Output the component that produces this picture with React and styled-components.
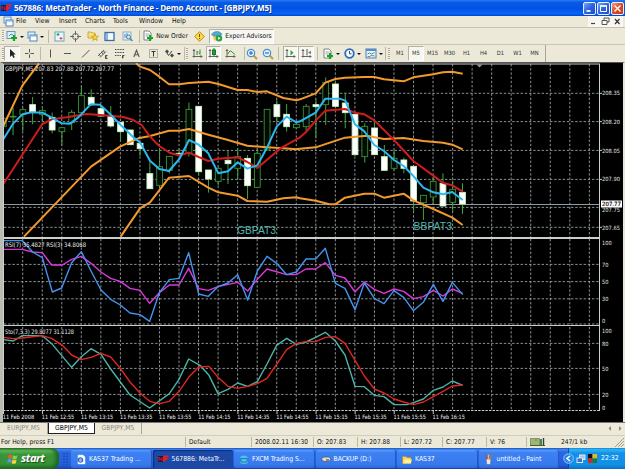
import styled, { createGlobalStyle, css } from "styled-components";

/* ===== GLOBAL ===== */

const GlobalStyle = createGlobalStyle`
*{ box-sizing:border-box; }
body{
margin:0;
overflow:hidden;
background:#ece9d8;
font-family:"DejaVu Sans Condensed","DejaVu Sans",sans-serif;
font-size:6.6px;
line-height:1;
color:#111;
}
svg{ display:block; flex:none; }
`;

const Window = styled.div`
display:flex;
flex-direction:column;
width:625px;
height:469px;
overflow:hidden;
white-space:nowrap;
`;

/* ===== TITLE + MENU ===== */

const TitleBar = styled.header`
height:16px;
flex:none;
display:flex;
align-items:center;
padding:0 1px;
background:linear-gradient(#2a7cf0 0,#0a5be8 15%,#0052e0 50%,#0763fa 85%,#0146c8 100%);
`;

const Title = styled.h1`
margin:0 auto 0 2px;
font-family:"Open Sans","Noto Sans",sans-serif;
font-size:8.1px;
font-weight:700;
letter-spacing:-0.13px;
color:#fff;
text-shadow:1px 1px 0 #0a2f8c;
`;

const WinButton = styled.span`
width:13px;
height:13px;
margin-left:1px;
border:1px solid #e8eefc;
border-radius:2px;
display:flex;
align-items:center;
justify-content:center;
background:${p => p.$close ? "linear-gradient(135deg,#f0a080,#dd4a22 50%,#c03a18)" : "linear-gradient(135deg,#7ba4f4,#2d63e0 50%,#1c4fd0)"};
`;

const MenuBar = styled.nav`
height:12px;
flex:none;
display:flex;
align-items:center;
padding:0 2px 0 3px;
border-bottom:1px solid #c5c2b4;
font-size:6.8px;
`;

const MenuItem = styled.span`
width:${p => p.$w}px;
`;

const MdiButtons = styled.span`
margin-left:auto;
display:flex;
gap:1px;
background:#f8f7f2;
`;

/* ===== TOOLBARS ===== */

const Toolbar = styled.div`
height:17px;
flex:none;
display:flex;
align-items:center;
padding-left:2px;
width:${p => p.$w || 625}px;
border-bottom:${p => p.$line ? "1px solid #c9c6b8" : "0"};
border-right:${p => p.$w ? "1px solid #aaa798" : "0"};
`;

const Grip = styled.span`
width:2px;
height:12px;
flex:none;
margin-right:${p => p.$r || 0}px;
background:repeating-linear-gradient(#aaa799 0 1px,#f6f4ea 1px 2px);
`;

const Divider = styled.span`
width:1px;
height:13px;
flex:none;
background:#bdbaaa;
margin:0 ${p => p.$r || 0}px 0 ${p => p.$l || 0}px;
`;

const Slot = styled.span`
width:${p => p.$w}px;
height:15px;
flex:none;
display:flex;
align-items:center;
justify-content:center;
gap:2px;
${p => p.$on && css`
background:#f7f6f0;
border:1px solid #b4b1a3;
border-right-color:#fff;
border-bottom-color:#fff;
`}
`;

const Caret = styled.i`
border:2px solid transparent;
border-top:2.5px solid #111;
border-bottom:0;
margin-top:1px;
`;

const Period = styled(Slot)`
font-size:5.8px;
color:#333;
`;

/* ===== CHART ===== */

const ChartFrame = styled.main`
height:360px;
flex:none;
background:#000;
border-left:2px solid #b9bdb0;
border-right:2px solid #e8e6d8;
border-top:1px solid #555;

svg{ margin-left:-2px; }
`;

const Note = styled.text`
font-family:"Liberation Sans",Arial,sans-serif;
font-size:10.5px;
fill:#4fb8b0;
`;

/* ===== BOTTOM ===== */

const Tabs = styled.div`
height:13px;
flex:none;
display:flex;
align-items:flex-start;
border-top:1px solid #777;
`;

const Tab = styled.span`
width:${p => p.$w}px;
height:11px;
display:flex;
align-items:center;
justify-content:center;
font-size:6.8px;
color:${p => p.$on ? "#000" : "#8e8b7e"};
background:${p => p.$on ? "#fff" : "transparent"};
border-right:1px solid ${p => p.$on ? "#222" : "#aaa798"};
${p => p.$on && "border-bottom:1px solid #222;border-left:1px solid #222;"}
`;

const TabArrows = styled.span`
margin:2px 3px 0 auto;
display:flex;
gap:6px;
`;

const StatusBar = styled.footer`
height:13px;
flex:none;
display:flex;
align-items:center;
border-top:1px solid #d0cdbd;
background:#ece9d8;
`;

const Cell = styled.span`
width:${p => p.$w}px;
height:10px;
flex:none;
display:flex;
align-items:center;
padding-left:${p => p.$first ? 1 : 3}px;
border-left:${p => p.$first ? "0" : "1px solid #bbb8a8"};
`;

const TaskBar = styled.div`
height:21px;
flex:none;
display:flex;
align-items:stretch;
background:linear-gradient(#1f50b8 0,#3f86f2 8%,#2a66dd 20%,#245edb 80%,#1941a5 100%);
color:#fff;
`;

const Start = styled.div`
width:59px;
display:flex;
align-items:center;
gap:3px;
padding-left:7px;
border-radius:0 8px 8px 0;
background:linear-gradient(#2f7a2f 0,#5fb85c 12%,#3a963a 30%,#379137 75%,#256f25 100%);
box-shadow:inset -3px 0 4px #1d5f1d;
font-family:"Open Sans",sans-serif;
font-size:11.2px;
font-style:italic;
font-weight:700;
text-shadow:1px 1px 1px #1a4a1a;

span{ margin-top:-2px; letter-spacing:-0.5px; }
`;

const Quick = styled.span`
width:12px;
display:flex;
align-items:center;
justify-content:center;
`;

const Task = styled.div`
width:80.5px;
margin:2px 1px 1px 0;
flex:none;
display:flex;
align-items:center;
gap:3px;
padding-left:5px;
border-radius:2px;
font-size:6.8px;
background:${p => p.$on ? "#1c48a6" : "linear-gradient(#5c9bfa 0,#3c81f3 15%,#3879ec 80%,#2e69d8 100%)"};
box-shadow:${p => p.$on ? "inset 1px 1px 1px #0d2d78" : "inset -1px 0 0 #2558bf"};
`;

const Tray = styled.div`
flex:1;
margin-left:8px;
display:flex;
align-items:center;
gap:2px;
font-size:6.8px;
background:linear-gradient(#1a7fd8 0,#2eb4f2 8%,#1290e8 25%,#1190e8 80%,#0d6fc0 100%);
border-left:1px solid #0b4c9c;

svg:first-child{ margin-left:-6px; }
span{ margin-left:2px; }
`;

/* ===== ICONS ===== */

const Svg = ({ w = 11, h = 11, children }) => (
  <svg width={w} height={h} viewBox={`0 0 ${w} ${h}`} fill="none">{children}</svg>
);

const Plus = ({ x, y }) => (
  <path d={`M${x} ${y - 3}v6M${x - 3} ${y}h6`} stroke="#12a52a" strokeWidth="2.2" />
);

const Logo = () => (
  <Svg w={11} h={8}>
    <rect y="1" width="6" height="6" fill="#151a3c" />
    <path d="M1 6V2l3 4V2" stroke="#c22" strokeWidth="1" />
    <path d="M6 7V1.5h4.500M6 4h3.500" stroke="#ef1c2c" strokeWidth="1.800" />
  </Svg>
);

const Windows = () => (
  <Svg>
    <rect x="1" y="1" width="7" height="6" fill="#e8f3fc" stroke="#5b8fc4" />
    <rect x="3" y="4" width="7" height="6" fill="#fff" stroke="#4a82be" />
    <path d="M3 5h7" stroke="#69a7e0" />
  </Svg>
);

const NewChart = () => (
  <Svg w={12} h={12}>
    <rect x="1" y="1.500" width="8" height="7" fill="#dceefa" stroke="#6898bd" />
    <path d="M3 6l2-2 2 1" stroke="#4b90c8" />
    <Plus x={8} y={8} />
  </Svg>
);

const Market = () => (
  <Svg>
    <rect x="1" y="1" width="9" height="9" fill="#eaf7ff" stroke="#6aa0c8" />
    <path d="M2.800 4l1.200-1.500L5.200 4z" fill="#189f36" stroke="#189f36" />
    <path d="M5.800 7L7 8.300 8.200 7z" fill="#de3b24" stroke="#de3b24" />
  </Svg>
);

const Compass = () => (
  <Svg>
    <circle cx="5.500" cy="5.500" r="3" stroke="#666" />
    <path d="M5.500 0v4M5.500 7v4M0 5.500h4M7 5.500h4" stroke="#666" />
  </Svg>
);

const StarFolder = () => (
  <Svg w={12} h={12}>
    <path d="M1 2h3l1 1h3v5H1z" fill="#f8df7c" stroke="#c39a2a" strokeWidth=".8" />
    <path d="M8 4l1 2.200 2.500.200-1.900 1.600.600 2.500L8 9.200 5.800 10.500l.600-2.500-1.900-1.600L7 6.200z" fill="#fbd52c" stroke="#b8860b" strokeWidth=".6" />
  </Svg>
);

const Terminal = () => (
  <Svg>
    <rect x="1" y="1.500" width="9" height="8" fill="#f4faff" stroke="#3570aa" strokeWidth="1.300" />
    <path d="M3 2v7" stroke="#3570aa" />
  </Svg>
);

const Tester = () => (
  <Svg>
    <rect x="1" y="1" width="8" height="8" fill="#e7f1f8" stroke="#7f9db4" strokeWidth=".8" />
    <path d="M3 3v4M5 2v4" stroke="#3f8ac4" />
    <circle cx="6.500" cy="6" r="2" fill="#cde9fc" stroke="#4f80a8" />
    <path d="M8 7.500l2.500 2.500" stroke="#4f80a8" strokeWidth="1.300" />
  </Svg>
);

const Order = () => (
  <Svg w={11} h={12}>
    <path d="M1 1h5l2 2v7H1z" fill="#fff" stroke="#667" strokeWidth=".8" />
    <path d="M2.500 4h4M2.500 6h3" stroke="#777" strokeWidth=".7" />
    <Plus x={7} y={8} />
  </Svg>
);

const Warning = () => (
  <Svg>
    <path d="M5.500.700l4.800 4.800-4.800 4.800L.700 5.500z" fill="#fbd94a" stroke="#b98b12" />
    <path d="M5.500 3v3M5.500 7v1" stroke="#705000" />
  </Svg>
);

const Expert = () => (
  <Svg w={12} h={12}>
    <path d="M2 6h8l-1 4.500H3z" fill="#f2c84b" />
    <path d="M.500 4.800C2 1 9 0 11 4.500L8 6H3z" fill="#53a8d6" stroke="#3484ae" strokeWidth=".6" />
    <circle cx="8" cy="8.300" r="3.200" fill="#27a43b" />
    <path d="M7.200 6.800v3l2.300-1.500z" fill="#fff" />
  </Svg>
);

const Cursor = () => (
  <Svg><path d="M3 1v8l2-1.800L6.400 10l1.300-.700L6.500 6.500h2.300z" fill="#222" /></Svg>
);

const Line = ({ d, c = "#555", sw = 1 }) => (
  <Svg><path d={d} stroke={c} strokeWidth={sw} /></Svg>
);

const Channel = () => (
  <Svg>
    <path d="M1 8l6-6M3 9.500l6-6M2 5.500l1.500 3M4.500 3.500l1.500 3M6.500 2l1 3" stroke="#444" strokeWidth=".8" />
    <path d="M10.500 7.500H8.500v3h2M8.500 9h1.500" stroke="#111" strokeWidth=".7" />
  </Svg>
);

const Fibo = () => (
  <Svg>
    <path d="M1 1.500h9M1 4.500h9M1 7.500h6" stroke="#444" strokeDasharray="1 .6" />
    <path d="M10.500 7.500h-2v3M8.500 9h1.500" stroke="#111" strokeWidth=".7" />
  </Svg>
);

const TextLabel = () => (
  <Svg>
    <rect x="1.500" y="1.500" width="8" height="8" stroke="#777" strokeDasharray="1 1" />
    <path d="M3.500 3.500h4M5.500 3.500v5" stroke="#333" />
  </Svg>
);

const Arrows = () => (
  <Svg>
    <path d="M1 3.500L3 1.500l2 2-2 2z" fill="#444" />
    <path d="M6 7.500l2-2 2 2-2 2z" fill="#444" />
    <path d="M3 5l1.500 2.500L8 3" stroke="#444" />
  </Svg>
);

/* small axis with something plotted on it */
const Axis = ({ children }) => (
  <Svg>
    <path d="M2 1v8.500M.500 8.500H10.500M.800 2.500h2.400M9 7.200v2.600" stroke="#555" strokeWidth=".9" />
    {children}
  </Svg>
);

const Zoom = ({ plus }) => (
  <Svg w={12} h={12}>
    <path d="M7.500 7.500L11 11" stroke="#c79b2b" strokeWidth="2" />
    <circle cx="5" cy="5" r="3.700" fill="#dff1ff" stroke="#4a90cf" strokeWidth="1.200" />
    <path d={plus ? "M3 5h4M5 3v4" : "M3 5h4"} stroke="#1d64b4" strokeWidth="1.100" />
  </Svg>
);

const Clock = () => (
  <Svg>
    <circle cx="5.500" cy="5.500" r="4.300" fill="#f3faff" stroke="#2a6dbb" strokeWidth="1.800" />
    <path d="M5.500 3v2.800h2" stroke="#335" strokeWidth=".9" />
  </Svg>
);

const Template = () => (
  <Svg w={12} h={11}>
    <rect x="1" y="1" width="10" height="9" fill="#e8f4fc" stroke="#4a7fae" />
    <path d="M1 2h10" stroke="#4a8fd0" strokeWidth="2" />
    <path d="M2.500 6l2-1 2 1 3-1.500M2.500 8.500h2l2-1 3 .500" stroke="#466" strokeWidth=".8" />
  </Svg>
);

const Flag = () => (
  <Svg w={11} h={12}>
    <path d="M1.500 2.200Q3.500.800 5.300 2L4.700 5.500Q3 4.500 1 5.800z" fill="#ee5a2a" />
    <path d="M6 2.300q2 1.200 4.300 0l-.700 3.600q-2 1.100-4.200 0z" fill="#8cd04a" />
    <path d="M.900 6.500q1.900-1.400 3.700-.200L4 9.900Q2.200 8.700.200 10z" fill="#5a94f0" />
    <path d="M5.300 6.700q2 1.200 4.200 0l-.700 3.500q-2 1.200-4.100 0z" fill="#fbd33c" />
  </Svg>
);

const Page = () => (
  <Svg w={10} h={11}>
    <path d="M2 1h5l2 2v7H2z" fill="#fff" stroke="#d7e3ff" strokeWidth=".5" />
    <circle cx="4.500" cy="6" r="2.200" stroke="#2765c8" strokeWidth="1.200" />
    <path d="M2.500 6h4" stroke="#2765c8" />
  </Svg>
);

const Globe = () => (
  <Svg w={10} h={11}>
    <path d="M1 3q3-3 8 0L7 5.500 9 9q-4 2-8 0l2-3z" fill="#4ec4e8" />
    <path d="M2 4.500h6M2 8h6" stroke="#1d7fae" />
  </Svg>
);

const Drive = () => (
  <Svg w={10} h={8}>
    <path d="M0 4l3-2h5l2 2-2 2.500H3z" fill="#d8d8d8" stroke="#555" strokeWidth=".7" />
    <path d="M5 5h3" stroke="#333" />
  </Svg>
);

const Folder = () => (
  <Svg w={10} h={9}>
    <path d="M.500 1.500h3.500l1 1h4v6h-8.500z" fill="#f5d560" stroke="#b58e22" strokeWidth=".7" />
    <path d="M1 8.500L2.500 4.500H10L8.700 8.500z" fill="#fff0a0" />
  </Svg>
);

const Paint = () => (
  <Svg w={10} h={11}>
    <path d="M2 5h5l-.700 5.500H2.700z" fill="#e2e8f0" stroke="#667" strokeWidth=".6" />
    <path d="M3 5L1.500 1" stroke="#e33" strokeWidth="1.200" />
    <path d="M4.500 5V.500" stroke="#f2c22c" strokeWidth="1.300" />
    <path d="M6 5l1.700-4" stroke="#b0763a" strokeWidth="1.300" />
  </Svg>
);

const Meter = () => (
  <Svg w={15} h={8}>
    <path d="M1 0v8M3 0v8M5 0v8M7 0v8M9 0v8" stroke="#1f5b28" strokeWidth="1.100" />
    <path d="M2 1v6M4 1v6M6 3v4M8 1v6" stroke="#dcd458" strokeWidth=".9" />
    <path d="M11 1v7M13.500 0v8" stroke="#22492a" strokeWidth="1.400" />
    <path d="M0 7.500h15" stroke="#2d6b38" />
  </Svg>
);

/* ===== CHART DATA ===== */

// values are in thirds of a pixel, each part carries its own x shift
const series = (...parts) =>
  parts.map(([dx, pts]) =>
    pts.split(" ").map(p => {
      const [x, y] = p.split(",");
      return `${(+x + dx) / 3},${+y / 3}`;
    }).join(" ")
  ).join(" ");

const upperStart = series([0, "10,198 67,77 117,10"]);
const upper = series(
  [0, "408,10 420,20 450,30"],
  [450, "28,50 57,73 88,73 117,69 175,65 205,72 263,90 292,90 322,96 351,94 400,114 439,121"],
  [900, "0,118 47,100 76,68 106,57 135,53 193,51 223,51 252,58 311,64 340,52 400,43 429,37 457,35 488,41"]
);
const middle = series(
  [0, "72,530 273,320 360,260 415,235 450,228"],
  [450, "57,212 88,212 117,207 175,224 234,240 292,257 351,262 400,265 439,268"],
  [900, "0,266 47,262 135,233 200,227 252,237 311,234 370,243 429,248 457,254 488,268"]
);
const lower = series(
  [0, "362,530 420,445 450,427"],
  [450, "57,353 117,348 175,383 205,397 263,407 292,423 351,425 400,415 439,412"],
  [900, "0,415 47,422 88,433 106,433 135,413 193,401 223,401 252,413 311,401 340,421 400,447 457,473 488,495"]
);
const bands = [upperStart, upper, middle, lower];

const slow = series(
  [0, "10,372 127,192 155,178 200,172 260,162 330,167 370,171 400,180 425,195 450,230"],
  [450, "28,258 60,279 88,286 117,278 146,291 175,303 205,296 263,292 292,306 322,324 390,266 439,238"],
  [900, "0,232 18,216 47,182 76,152 135,147 165,158 193,163 223,181 282,240 340,303 400,347 429,369 457,376 488,395"]
);
const fast = series(
  [0, "10,238 40,190 67,163 95,157 127,158 155,173 185,190 210,191 235,172 272,133 300,134 330,162 362,195 400,232 420,247 450,302"],
  [450, "28,327 57,333 88,297 117,240 146,254 175,280 205,340 234,334 263,307 292,326 322,316 351,263 380,200 410,170 439,187"],
  [900, "0,184 47,158 76,116 118,116 136,122 165,193 193,214 223,255 252,273 282,300 311,318 340,348 370,383 400,397 429,403 457,396 488,420"]
);

const rsiFast = series(
  [0, "10,14 67,14 98,48 127,65 157,168 185,156 215,80 244,47 273,105 303,162 332,190 361,207 390,231 420,236 449,256 478,170 508,131 537,127 566,50 596,174 625,181 654,152 684,141 713,116 743,192 772,105 801,61 830,82 860,116 889,108"],
  [900, "18,69 47,69 76,37 106,142 135,157 165,221 193,141 223,187 252,203 282,164 311,184 340,224 370,199 400,145 429,196 457,139 488,176"]
);
const rsiSlow = series(
  [0, "10,40 67,40 98,48 127,50 155,87 187,87 215,70 244,61 273,82 303,108 332,127 361,136 390,157 420,163 449,202 478,170 508,147 537,147 566,97 596,158 625,163 654,152 713,139 743,165 772,130 801,99 860,116 889,116"],
  [900, "18,99 47,99 76,80 106,118 135,126 165,168 193,138 223,160 252,172 282,159 311,166 340,188 370,182 400,163 429,180 457,159 488,172"]
);
const stoMain = series(
  [0, "10,311 40,315 67,299 127,299 157,325 215,394 244,362 273,338 303,355 332,399 390,477 449,516 508,473 537,430 566,369 600,388 627,418 654,473 684,460 713,441 743,451 772,437 801,384 830,328 860,307 889,325"],
  [900, "18,318 47,304 76,289 106,315 135,357 165,451 193,452 223,478 252,482 282,506 320,506 340,500 370,489 400,463 429,453 457,435 488,448"]
);
const stoSignal = series(
  [0, "10,304 40,308 67,306 127,299 155,307 187,328 215,357 244,371 273,364 303,352 332,363 361,397 390,438 420,471 449,496 478,503 508,496 537,466 566,424 596,393 627,391 654,424 684,451 713,457 743,451 772,443 801,427 860,341 889,322"],
  [900, "18,317 47,317 76,304 106,302 135,322 165,373 193,420 223,459 252,471 282,489 311,498 340,506 370,498 400,482 429,466 457,450 488,447"]
);

// high, low, body top, body bottom, falling
const candles = [
  [155, 200, 175, 200, 0], [143, 226, 169, 171, 0], [144, 213, 149, 163, 0], [111, 193, 134, 157, 1],
  [145, 185, 152, 163, 0], [158, 220, 172, 210, 1], [203, 257, 203, 215, 0], [150, 210, 157, 188, 0],
  [78, 165, 107, 158, 0], [88, 138, 112, 134, 1], [138, 170, 146, 168, 1], [138, 203, 167, 198, 1],
  [187, 245, 187, 215, 1], [210, 254, 210, 254, 1], [250, 288, 250, 266, 1], [305, 386, 341, 386, 1],
  [265, 376, 320, 376, 0], [289, 340, 289, 331, 0], [265, 285, 280, 284, 1], [128, 290, 148, 280, 0],
  [139, 347, 139, 335, 1], [330, 398, 330, 357, 1], [320, 377, 325, 364, 0], [273, 372, 301, 311, 1],
  [265, 357, 290, 325, 0], [285, 417, 295, 377, 1], [265, 382, 280, 382, 0], [148, 270, 148, 270, 0],
  [120, 190, 134, 170, 1], [132, 215, 163, 200, 1], [182, 207, 193, 203, 0], [132, 212, 139, 200, 0],
  [118, 235, 134, 140, 1], [52, 195, 67, 134, 0], [62, 139, 72, 139, 1], [98, 205, 129, 158, 1],
  [158, 288, 163, 284, 1], [190, 308, 199, 290, 0], [182, 284, 204, 284, 1], [255, 331, 290, 331, 1],
  [270, 330, 295, 325, 0], [293, 340, 300, 325, 1], [319, 455, 319, 423, 1], [406, 480, 406, 428, 0],
  [350, 432, 364, 411, 0], [340, 438, 370, 438, 1], [362, 455, 388, 427, 0], [370, 462, 397, 432, 1],
];

const times = ["2008", "12:55", "13:15", "13:35", "13:55", "14:15", "14:35", "14:55", "15:15", "15:35", "15:55", "16:15"];
const columns = Array.from({ length: 30 }, (_, i) => 22.7 + i * 19.54);

/* ===== CHART PANES ===== */

const Grid = ({ rows, top, bottom }) => (
  <g stroke="#a4aaad" strokeWidth=".85" strokeDasharray="2.400 1.800">
    {columns.map(x => <path key={x} d={`M${x} ${top}V${bottom}`} />)}
    {rows.map(y => <path key={y} d={`M4 ${y}H599`} />)}
  </g>
);

const Plot = ({ points, color, width = 1.4 }) => (
  <polyline points={points} fill="none" stroke={color} strokeWidth={width} strokeLinejoin="round" />
);

const Scale = ({ items }) => (
  <g fill="#e4e4e4" fontSize="5.700">
    {items.map(([label, y]) => (
      <text key={label} x="602" y={y} textLength={label.length > 3 ? 18 : label.length * 3.2} lengthAdjust="spacingAndGlyphs">{label}</text>
    ))}
  </g>
);

const Frame = ({ top, bottom }) => (
  <path d={`M3.500 ${top}V${bottom}M599.500 ${top}V${bottom}`} stroke="#ccd0cc" />
);

const PricePane = () => (
  <svg width="623" height="175" viewBox="0 63 623 175">
    <Grid rows={[93.3, 121.6, 150.4, 179.4, 207.4, 227.3]} top={64} bottom={237} />
    <path d="M3 204.500H599" stroke="#8f9aa3" />
    <g transform="translate(0 60)">
      {candles.map(([hi, lo, a, b, down], i) => {
        const x = 3.3 + i * 9.77;
        return (
          <g key={i} stroke="#40a43c" strokeWidth="1">
            <path d={`M${x} ${hi / 3}V${lo / 3}`} />
            <rect x={x - 2.9} y={a / 3} width="5.800" height={(b - a) / 3} fill={down ? "#fff" : "#020a02"} stroke={down ? "#c9f7c0" : "#3a923a"} strokeWidth=".9" />
          </g>
        );
      })}
      {bands.map(points => <Plot key={points} points={points} color="#f39a2e" width={2} />)}
      <Plot points={slow} color="#d01c1c" width={2} />
      <Plot points={fast} color="#2cb8f0" width={2} />
    </g>
    <rect x="0" y="63" width="3" height="175" fill="#b9bdb0" />
    <path d="M3 64H600" stroke="#c9cfca" />
    <path d="M3 237.700H600" stroke="#c9cfca" strokeWidth="1.400" />
    <Frame top={64} bottom={238} />
    <path d="M476.500 64.500h6l-3 3z" fill="#8d989c" />
    <text x="5" y="71.300" fontSize="6.200" fill="#eee" textLength="109" lengthAdjust="spacingAndGlyphs">GBPJPY,M5  207.83 207.88 207.72 207.77</text>
    <Note x="237" y="234" textLength="39" lengthAdjust="spacingAndGlyphs">GBPAT3</Note>
    <Note x="413.500" y="229.500" textLength="38.500" lengthAdjust="spacingAndGlyphs">BBPAT3</Note>
    <Scale items={[["208.35", 95], ["208.20", 123.5], ["208.05", 152.5], ["207.90", 181.3], ["207.75", 211.5], ["207.65", 229.5]]} />
    <path d="M600 93.300h2M600 121.600h2M600 150.400h2M600 179.400h2M600 227.300h2" stroke="#ccc" />
    <rect x="601" y="200.500" width="21" height="7" fill="#fff" />
    <text x="602" y="206" fontSize="5.700" fill="#000" stroke="#000" strokeWidth=".15" textLength="19" lengthAdjust="spacingAndGlyphs">207.77</text>
  </svg>
);

const RsiPane = () => (
  <svg width="623" height="87" viewBox="0 238 623 87">
    <Grid rows={[264.4, 281.6, 298.8, 324]} top={239} bottom={324} />
    <g transform="translate(0 236)">
      <Plot points={rsiSlow} color="#dc38dc" />
      <Plot points={rsiFast} color="#4494f0" />
    </g>
    <rect x="0" y="238" width="3" height="87" fill="#b9bdb0" />
    <path d="M3 238.500H600" stroke="#c9cfca" />
    <Frame top={238} bottom={325} />
    <text x="5" y="246.800" fontSize="6.200" fill="#eee" textLength="81" lengthAdjust="spacingAndGlyphs">RSI(7) 35.4827  RSI(3) 34.8068</text>
    <Scale items={[["100", 245], ["70", 266.5], ["50", 283.8], ["30", 301], ["0", 322.5]]} />
  </svg>
);

const StoPane = () => (
  <svg width="623" height="97" viewBox="0 325 623 97">
    <Grid rows={[343.4, 368.4, 394.4]} top={327} bottom={410} />
    <g transform="translate(0 236)">
      <Plot points={stoMain} color="#4cb4a6" />
      <Plot points={stoSignal} color="#e02822" />
    </g>
    <rect x="0" y="325" width="3" height="97" fill="#b9bdb0" />
    <path d="M3 325.500H600" stroke="#c9cfca" strokeWidth="1.200" />
    <path d="M3 410.500H600" stroke="#c9cfca" strokeDasharray="2.400 1.200" />
    <Frame top={325} bottom={411} />
    <text x="5" y="333.800" fontSize="6.200" fill="#eee" textLength="69" lengthAdjust="spacingAndGlyphs">Sto(7,3,3) 29.8077 31.1128</text>
    <Scale items={[["100", 332.5], ["80", 345.5], ["50", 370.5], ["20", 396.5], ["0", 409.5]]} />
    <g fill="#f2f2f2" fontSize="5.900">
      {times.map((t, i) => (
        <g key={t}>
          <path d={`M${3.5 + i * 39.07} 410v4`} stroke="#ccc" />
          <text x={2.8 + i * 39.07} y="418.800" textLength={i ? 32.3 : 31.3} lengthAdjust="spacingAndGlyphs">11 Feb {t}</text>
        </g>
      ))}
    </g>
  </svg>
);

/* ===== PARTS ===== */

const FileToolbar = () => (
  <Toolbar $line>
    <Grip $r={1} />
    <Slot $w={20}><NewChart /><Caret /></Slot>
    <Slot $w={21}><Windows /><Caret /></Slot>
    <Divider $l={2} $r={2} />
    <Slot $w={16}><Market /></Slot>
    <Slot $w={17}><Compass /></Slot>
    <Slot $w={17}><StarFolder /></Slot>
    <Slot $w={17}><Terminal /></Slot>
    <Slot $w={18}><Tester /></Slot>
    <Divider $l={3} $r={1} />
    <Slot $w={49}><Order />New Order</Slot>
    <Slot $w={19}><Warning /></Slot>
    <Slot $w={65} $on><Expert />Expert Advisors</Slot>
  </Toolbar>
);

const DrawToolbar = () => (
  <Toolbar $w={546}>
    <Grip />
    <Slot $w={16} $on><Cursor /></Slot>
    <Slot $w={18}><Line d="M5.500 1v3.500M5.500 6.500V10M1 5.500h3.500M6.500 5.500H10" /></Slot>
    <Divider $l={2} $r={1} />
    <Slot $w={16}><Line d="M5.500 1.500v8" /></Slot>
    <Slot $w={19}><Line d="M2 5.500h7" /></Slot>
    <Slot $w={16}><Line d="M2 9.500L9.500 2" /></Slot>
    <Slot $w={18}><Channel /></Slot>
    <Slot $w={16}><Fibo /></Slot>
    <Slot $w={18}><Line d="M2.800 9L5.500 2.300 8.200 9M3.800 6.800h3.400" sw={1.1} /></Slot>
    <Slot $w={16}><TextLabel /></Slot>
    <Slot $w={22}><Arrows /><Caret /></Slot>
    <Divider $l={1} $r={1} />
    <Grip $r={1} />
    <Slot $w={17}>
      <Axis><path d="M5 3v4M5 4h1.500M8 1.500v5M7 5.500h1" stroke="#2d8a3a" /></Axis>
    </Slot>
    <Slot $w={15} $on>
      <Axis><rect x="4.500" y="2" width="3" height="4.500" fill="#2bc24a" stroke="#147a2a" /><path d="M6 0v8" stroke="#147a2a" /></Axis>
    </Slot>
    <Slot $w={19}>
      <Axis><path d="M3 6q2-5 4-2l3 2.500" stroke="#2d9a40" /></Axis>
    </Slot>
    <Divider $l={4} />
    <Slot $w={13}><Zoom plus /></Slot>
    <Slot $w={20}><Zoom /></Slot>
    <Divider $r={4} />
    <Slot $w={15} $on>
      <Axis><path d="M5.500 2v5.500l3-2.700z" fill="#1fa83a" /></Axis>
    </Slot>
    <Slot $w={16} $on>
      <Axis><path d="M6 1v6.500" stroke="#555" /><path d="M10 2.800L7 4.500l3 1.700z" fill="#777" /></Axis>
    </Slot>
    <Divider $l={3} $r={5} />
    <Slot $w={17}><Order /><Caret /></Slot>
    <Slot $w={24}><Clock /><Caret /></Slot>
    <Slot $w={19}><Template /><Caret /></Slot>
    <Divider $l={2} $r={2} />
    <Grip $r={2} />
    <Period $w={16}>M1</Period>
    <Period $w={16} $on>M5</Period>
    {["M15", "M30", "H1", "H4", "D1", "W1", "MN"].map(p => <Period key={p} $w={17}>{p}</Period>)}
  </Toolbar>
);

/* ===== COMPONENT ===== */

export default function App() {
  return (
    <Window>
      <GlobalStyle />

      <TitleBar>
        <Logo />
        <Title>567886: MetaTrader - North Finance - Demo Account - [GBPJPY,M5]</Title>
        <WinButton><Svg w={9} h={9}><path d="M1.500 7h4" stroke="#fff" strokeWidth="1.800" /></Svg></WinButton>
        <WinButton><Svg w={9} h={9}><path d="M1.500 2h6v5.500h-6z" stroke="#fff" /><path d="M1 2h7" stroke="#fff" strokeWidth="1.500" /></Svg></WinButton>
        <WinButton $close><Svg w={9} h={9}><path d="M1.500 1.500l6 6M7.500 1.500l-6 6" stroke="#fff" strokeWidth="1.400" /></Svg></WinButton>
      </TitleBar>

      <MenuBar>
        <MenuItem $w={13}><Windows /></MenuItem>
        <MenuItem $w={19}>File</MenuItem>
        <MenuItem $w={24}>View</MenuItem>
        <MenuItem $w={26}>Insert</MenuItem>
        <MenuItem $w={28}>Charts</MenuItem>
        <MenuItem $w={26}>Tools</MenuItem>
        <MenuItem $w={33}>Window</MenuItem>
        <MenuItem $w={20}>Help</MenuItem>
        <MdiButtons>
          <Svg><path d="M3 7.500h4" stroke="#444" strokeWidth="1.200" /></Svg>
          <Svg><path d="M4 4V2h5v4H7M2 4.500h5v4H2z" stroke="#444" strokeWidth=".9" /></Svg>
          <Svg><path d="M3 3l4.500 5M7.500 3L3 8" stroke="#333" strokeWidth="1.200" /></Svg>
        </MdiButtons>
      </MenuBar>

      <FileToolbar />
      <DrawToolbar />

      <ChartFrame>
        <PricePane />
        <RsiPane />
        <StoPane />
      </ChartFrame>

      <Tabs>
        <Tab $w={48}>EURJPY,M5</Tab>
        <Tab $w={47} $on>GBPJPY,M5</Tab>
        <Tab $w={47}>GBPJPY,M5</Tab>
        <TabArrows>
          <Svg w={4} h={7}><path d="M3 1L.500 3.500 3 6z" fill="#8e8b7e" /></Svg>
          <Svg w={4} h={7}><path d="M1 1l2.500 2.500L1 6z" fill="#8e8b7e" /></Svg>
        </TabArrows>
      </Tabs>

      <StatusBar>
        <Cell $w={185} $first>For Help, press F1</Cell>
        <Cell $w={66}>Default</Cell>
        <Cell $w={62}>2008.02.11 16:30</Cell>
        <Cell $w={44}>O: 207.83</Cell>
        <Cell $w={43}>H: 207.88</Cell>
        <Cell $w={42}>L: 207.72</Cell>
        <Cell $w={44}>C: 207.77</Cell>
        <Cell $w={40}>V: 76</Cell>
        <Cell $w={34}><Meter /></Cell>
        <Cell $w={53} $first>247/1 kb</Cell>
        <Svg w={12} h={10}><path d="M2 10L11 1M5 10l6-6M8 10l3-3" stroke="#a09d8e" /></Svg>
      </StatusBar>

      <TaskBar>
        <Start><Flag /><span>start</span></Start>
        <Quick>
          <Svg w={5} h={14}><path d="M1 1v12M4 1v12" stroke="#1743a8" strokeWidth="1.300" strokeDasharray="1.300 1.500" /></Svg>
        </Quick>
        <Task><Page />KAS37 Trading ...</Task>
        <Task $on><Logo />567886: MetaTr...</Task>
        <Task><Globe />FXCM Trading S...</Task>
        <Task><Drive />BACKUP (D:)</Task>
        <Task><Folder />KAS37</Task>
        <Task><Paint />untitled - Paint</Task>
        <Tray>
          <Svg>
            <circle cx="5.500" cy="5.500" r="4.800" fill="#2b86e8" stroke="#a6d4ff" strokeWidth=".8" />
            <path d="M7 3L4 5.500 7 8" stroke="#fff" strokeWidth="1.500" />
          </Svg>
          <Svg w={10} h={10}>
            <rect x="3.500" y="1" width="5.500" height="4.500" fill="#9cc4f4" stroke="#e2ecf8" />
            <rect x="1" y="4" width="5.500" height="4.500" fill="#3a6cc8" stroke="#dce6f4" />
          </Svg>
          <Svg w={9} h={9}>
            <rect width="4.500" height="4.500" fill="#111" />
            <rect x="4.500" width="4.500" height="4.500" fill="#e3b820" />
            <rect y="4.500" width="4.500" height="4.500" fill="#d42a1e" />
            <rect x="4.500" y="4.500" width="4.500" height="4.500" fill="#1d7a32" />
          </Svg>
          <span>22:32</span>
        </Tray>
      </TaskBar>
    </Window>
  );
}
